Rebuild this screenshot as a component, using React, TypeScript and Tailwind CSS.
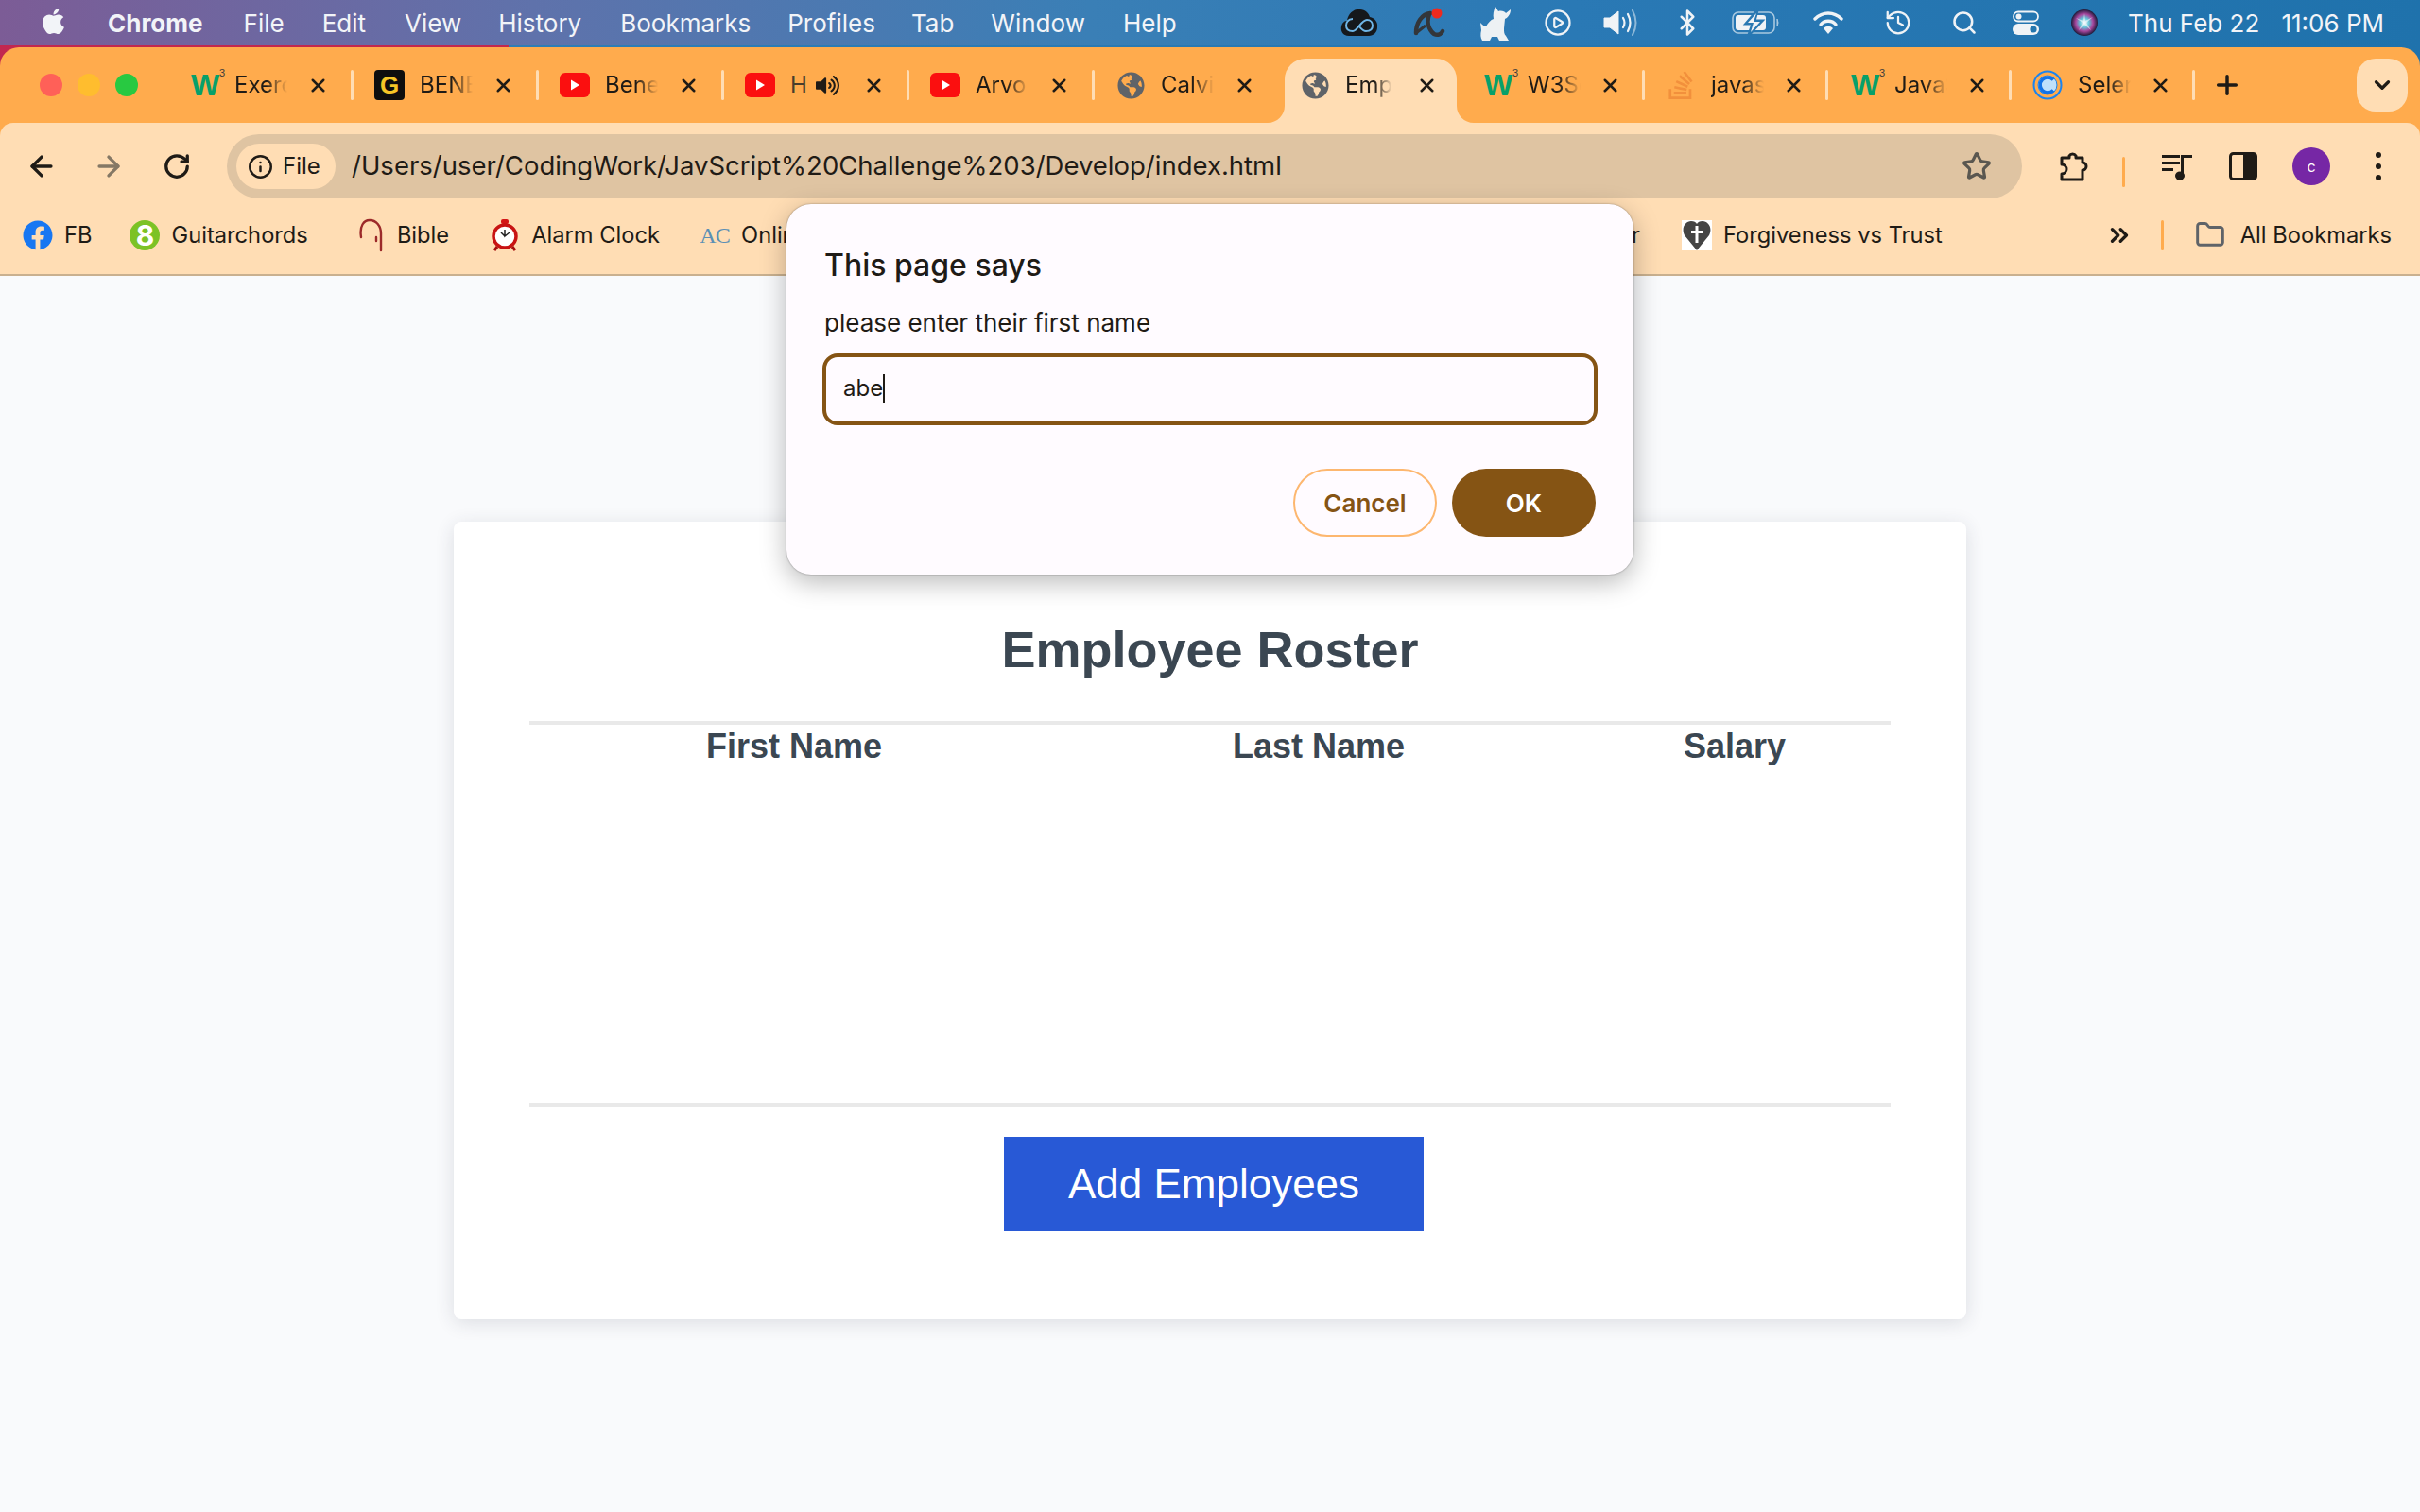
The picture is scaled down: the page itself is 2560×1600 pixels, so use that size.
import React from "react";
import { ArrowLeft, ArrowRight, RotateCw, Info, Star, X, Plus, ChevronDown, ChevronsRight, Folder, Search, History, Bluetooth, CirclePlay } from "lucide-react";
import { FaApple, FaFacebook, FaGlobeAmericas, FaVolumeUp, FaStackOverflow } from "react-icons/fa";

const W3 = () => (
  <span className="relative flex w-[32px] h-[32px] items-center justify-center font-['Liberation_Sans',sans-serif] font-bold text-[32px] leading-none text-[#07a06a] tracking-[-2px]">
    W<span className="absolute right-[-4px] top-[-2px] text-[11px] font-normal text-[#3c3c3c]">3</span>
  </span>
);
const GIcon = () => (
  <span className="flex w-[32px] h-[32px] items-center justify-center rounded-[4px] bg-[#0e0e0e] font-['Liberation_Sans',sans-serif] font-bold text-[26px] leading-none text-[#f6c627]">G</span>
);
const YT = () => (
  <svg width="32" height="26" viewBox="0 0 32 26"><rect width="32" height="26" rx="6" fill="#fb0f0f" /><path d="M12 7.5 L21 13 L12 18.5 Z" fill="#fff" /></svg>
);
const Globe = () => <FaGlobeAmericas size={29} color="#5f6368" />;
const SO = () => <FaStackOverflow size={34} color="#f2903c" />;
const Sel = () => (
  <svg width="32" height="34" viewBox="0 0 32 34" fill="none">
    <circle cx="16" cy="17" r="14.5" stroke="#1a84f0" strokeWidth="2" />
    <circle cx="16" cy="17" r="10" fill="#bfe0fb" stroke="#1a84f0" strokeWidth="1" />
    <path d="M22 11.5 A8 8 0 1 0 22 22.5" stroke="#1473e6" strokeWidth="3.5" />
  </svg>
);

type T = { icon: React.ReactNode; text: string; wide?: boolean; sep?: boolean; audio?: boolean };
const tabs: T[] = [
  { icon: <W3 />, text: "Exercises", wide: true, sep: true },
  { icon: <GIcon />, text: "BENEFITS", wide: true, sep: true },
  { icon: <YT />, text: "Benefits", wide: true, sep: true },
  { icon: <YT />, text: "H", wide: true, sep: true, audio: true },
  { icon: <YT />, text: "Arvo Part", wide: true, sep: true },
  { icon: <Globe />, text: "Calvin", wide: true, sep: false },
];
const tabs2: T[] = [
  { icon: <W3 />, text: "W3Schools", sep: true },
  { icon: <SO />, text: "javascript", sep: true },
  { icon: <W3 />, text: "JavaScript", sep: true },
  { icon: <Sel />, text: "Selenium", sep: true },
];

const Tab = ({ t }: { t: T }) => (
  <div className={`flex h-[56px] items-center shrink-0 ${t.wide ? "w-[196px]" : "w-[194px]"}`}>
    <div className="ml-[22px] flex w-[32px] justify-center shrink-0">{t.icon}</div>
    {t.audio ? (
      <div className="ml-[16px] flex w-[66px] items-center shrink-0">
        <span className="text-[24px] text-[#4a3d2c]">H</span>
        <FaVolumeUp size={25} color="#1f1b16" className="ml-[9px]" />
      </div>
    ) : (
      <div className="ml-[16px] w-[66px] shrink-0 overflow-hidden whitespace-nowrap text-[24px] text-[#1f1b16] [mask-image:linear-gradient(90deg,#000_50%,transparent_85%)]">{t.text}</div>
    )}
    <div className={`flex justify-center shrink-0 ${t.wide ? "w-[44px]" : "w-[42px]"}`}><X size={23} strokeWidth={2.6} color="#1f1b16" /></div>
    {t.sep && <div className="ml-auto h-[32px] w-[3px] rounded-full bg-[#ffddb4]" />}
  </div>
);

const Bm = ({ icon, text, className = "", gap = "ml-[12px]" }: { icon: React.ReactNode; text: string; className?: string; gap?: string }) => (
  <div className={`flex items-center shrink-0 ${className}`}>
    <div className="flex w-[32px] justify-center">{icon}</div>
    <span className={`${gap} text-[23.7px] text-[#1f1b16] whitespace-nowrap`}>{text}</span>
  </div>
);

const Alarm = () => (
  <svg width="28" height="34" viewBox="0 0 28 34">
    <rect x="10" y="0" width="8" height="5" rx="2" fill="#d41616" />
    <circle cx="14" cy="18" r="12" fill="#fff" stroke="#c81313" strokeWidth="3.5" />
    <path d="M14 11 V18 L19 14 M14 18 L10 14" stroke="#222" strokeWidth="1.5" fill="none" />
    <path d="M6 29 L3 33 M22 29 L25 33" stroke="#a40f0f" strokeWidth="3" />
  </svg>
);
const Heart = () => (
  <svg width="32" height="32" viewBox="0 0 32 32">
    <rect width="32" height="32" fill="#fff" />
    <path d="M16 32 L3 16 C-1 8 4 1 10 1 C13 1 15 2 16 4 C17 2 19 1 22 1 C28 1 33 8 29 16 Z" fill="#444" />
    <path d="M14.5 6 H17.5 V11 H22 V14 H17.5 V24 H14.5 V14 H10 V11 H14.5 Z" fill="#fff" />
  </svg>
);

const Dog = () => (
  <svg width="34" height="40" viewBox="0 0 34 40"><path d="M17 3 L20 8 C23 7 27 8 28 10 L33 6 C33 10 31 14 27 16 L26 26 C26 30 26 32 28 34 L31 39 H21 L19 35 H13 L11 39 H3 C1 36 1 32 2 28 L1 20 C3 22 5 24 7 24 C9 20 12 17 15 16 C14 11 15 7 17 3 Z" fill="#edf1f4" /></svg>
);
const Avira = () => (
  <svg width="34" height="34" viewBox="0 0 34 34" fill="none">
    <path d="M3 28 C3 17 9 8 18 7 M17 8 C14 16 16 24 22 29 C26 31 30 29 31 26" stroke="#33363a" strokeWidth="4.5" strokeLinecap="round" />
    <path d="M3 28 L13 20" stroke="#33363a" strokeWidth="3" />
    <circle cx="25" cy="7" r="5.5" fill="#ee2a1e" />
  </svg>
);
const Cloud = () => (
  <svg width="40" height="30" viewBox="0 0 40 30" fill="none">
    <path d="M9 29 C2 29 0 23 1 19 C2 14 5 13 7 13 C8 5 15 0 21 1 C26 1 30 5 31 9 C36 10 40 14 39 20 C39 25 35 29 30 29 Z" fill="#15181c" />
    <path d="M13 11 C8 11 6 15 6 18 C6 22 9 24 13 24 C18 24 22 12 28 12 C32 12 34 15 34 18 C34 22 31 24 27 24 C23 24 21 20 19 18" stroke="#6fb5e6" strokeWidth="2" />
  </svg>
);
const Vol = () => (
  <svg width="38" height="30" viewBox="0 0 38 30" fill="none">
    <path d="M1 10 H7 L16 3 V27 L7 20 H1 Z" fill="#f0f3f6" strokeLinejoin="round" stroke="#f0f3f6" />
    <path d="M21 10 Q24 15 21 20" stroke="#f0f3f6" strokeWidth="2.2" strokeLinecap="round" />
    <path d="M26 6 Q31 15 26 24" stroke="#f0f3f6" strokeWidth="2.2" strokeLinecap="round" />
    <path d="M31 2 Q38 15 31 28" stroke="#8fb9d8" strokeWidth="2" strokeLinecap="round" />
  </svg>
);
const Battery = () => (
  <svg width="52" height="26" viewBox="0 0 52 26" fill="none">
    <rect x="1" y="2" width="44" height="22" rx="6" stroke="#a9c9e0" strokeWidth="1.6" />
    <rect x="4" y="5" width="32" height="16" rx="3" fill="#f0f3f6" />
    <path d="M27 0 L15 14 H22 L18 26 L32 11 H24 Z" fill="#2978b2" stroke="#2978b2" strokeWidth="3" />
    <path d="M26 3 L17 13 H23 L20 23 L30 12 H23 Z" fill="#f0f3f6" />
    <path d="M48 9 Q50 13 48 17 Z" fill="#a9c9e0" stroke="#a9c9e0" />
  </svg>
);
const WifiIcon = () => (
  <svg width="32" height="26" viewBox="0 0 32 26" fill="none">
    <path d="M2 9 C10 1 22 1 30 9" stroke="#f0f3f6" strokeWidth="3.4" strokeLinecap="round" />
    <path d="M8 15 C12 10 20 10 24 15" stroke="#f0f3f6" strokeWidth="3.4" strokeLinecap="round" />
    <path d="M11 19 C14 16 18 16 21 19 L16 25 Z" fill="#f0f3f6" />
  </svg>
);
const Control = () => (
  <svg width="28" height="26" viewBox="0 0 28 26" fill="none">
    <rect x="1" y="1.5" width="26" height="10" rx="5" stroke="#f0f3f6" strokeWidth="1.8" />
    <circle cx="6.5" cy="6.5" r="3" fill="#f0f3f6" />
    <rect y="14" width="28" height="12" rx="6" fill="#f0f3f6" />
    <circle cx="22" cy="20" r="3.6" fill="#2476ae" />
  </svg>
);
const Siri = () => (
  <svg width="28" height="28" viewBox="0 0 28 28">
    <defs>
      <radialGradient id="sg" cx="50%" cy="50%" r="50%">
        <stop offset="0%" stopColor="#fff" />
        <stop offset="35%" stopColor="#62c6d8" />
        <stop offset="65%" stopColor="#a8469e" />
        <stop offset="100%" stopColor="#1c1a38" />
      </radialGradient>
    </defs>
    <circle cx="14" cy="14" r="14" fill="url(#sg)" />
    <path d="M14 4 L15 12 L23 8 L16 14 L21 22 L14 16 L8 22 L12 14 L5 9 L13 12 Z" fill="#f5f8fb" opacity=".6" />
  </svg>
);
const Puzzle = () => (
  <svg width="32" height="34" viewBox="0 0 32 34" fill="none">
    <path d="M3 8 H11 V6 A4 4 0 0 1 18 6 V8 H25 V13 A4 4 0 0 1 25 21 V31 H3 V25 A4.5 4.5 0 0 0 3 15 Z" stroke="#1f1b16" strokeWidth="3" strokeLinejoin="round" />
  </svg>
);
const Queue = () => (
  <svg width="32" height="30" viewBox="0 0 32 30" fill="#1f1b16">
    <rect x="0" y="3" width="19" height="3" /><rect x="0" y="10" width="19" height="3" /><rect x="0" y="17" width="12" height="3" />
    <rect x="20" y="3" width="12" height="3" /><rect x="20" y="3" width="3" height="21" /><ellipse cx="19" cy="25" rx="5" ry="4.5" />
  </svg>
);
const Side = () => (
  <svg width="30" height="30" viewBox="0 0 30 30" fill="none">
    <rect x="1.5" y="1.5" width="27" height="27" rx="3" stroke="#1f1b16" strokeWidth="3" />
    <rect x="15" y="1.5" width="13.5" height="27" fill="#1f1b16" />
  </svg>
);

const statusCells: [string, React.ReactNode][] = [
  ["w-[76px]", <Cloud />],
  ["w-[72px]", <Avira />],
  ["w-[67px]", <Dog />],
  ["w-[66px]", <CirclePlay size={30} color="#f0f3f6" strokeWidth={1.8} />],
  ["w-[68px]", <Vol />],
  ["w-[71px]", <Bluetooth size={30} color="#f0f3f6" strokeWidth={2} />],
  ["w-[76px]", <Battery />],
  ["w-[76px]", <WifiIcon />],
  ["w-[72px]", <History size={30} color="#f0f3f6" strokeWidth={1.8} />],
  ["w-[67px]", <Search size={28} color="#f0f3f6" strokeWidth={2.2} />],
  ["w-[63px]", <Control />],
  ["w-[62px]", <Siri />],
];

const menus: [string, string][] = [
  ["File", "ml-[43px]"], ["Edit", "ml-[40px]"], ["View", "ml-[41px]"], ["History", "ml-[39px]"], ["Bookmarks", "ml-[41px]"],
  ["Profiles", "ml-[39px]"], ["Tab", "ml-[38px]"], ["Window", "ml-[39px]"], ["Help", "ml-[40px]"],
];

export default function App() {
  return (
    <div className="relative flex h-[1600px] w-[2560px] flex-col overflow-hidden bg-[#f9fafc] font-['Inter',sans-serif]">
      {/* macOS menu bar */}
      <div className="flex h-[48px] shrink-0 items-center bg-[linear-gradient(90deg,#7c5c96_0%,#5f72ab_22%,#3a7fb6_45%,#2a79b5_65%,#1f72ac_100%)] text-[26px] text-[#f2f4f8]">
        <FaApple size={31} color="#f2f4f8" className="ml-[41px] mb-[3px]" />
        <span className="ml-[42px] font-bold">Chrome</span>
        {menus.map(([m, c]) => <span key={m} className={c}>{m}</span>)}
        <div className="flex-1" />
        {statusCells.map(([w, icon], i) => <div key={i} className={`flex justify-center ${w}`}>{icon}</div>)}
        <div className="ml-[15px] mr-[38px] flex w-[271px] justify-between whitespace-nowrap"><span>Thu Feb 22</span><span>11:06 PM</span></div>
      </div>

      {/* Browser chrome */}
      <div className="shrink-0 border-b-[2px] border-[#c9b08f] bg-[linear-gradient(90deg,#c2274f_0%,#c2274f_21%,#2f7db5_21%,#1f72ac_100%)] pt-[2px]">
        <div className="rounded-t-[20px] bg-[#ffab4d]">
          <div className="flex h-[80px] items-start pl-[42px] pt-[12px]">
            <div className="mt-[16px] h-[24px] w-[24px] shrink-0 rounded-full bg-[#ff6058]" />
            <div className="ml-[16px] mt-[16px] h-[24px] w-[24px] shrink-0 rounded-full bg-[#ffbd2e]" />
            <div className="ml-[16px] mt-[16px] h-[24px] w-[24px] shrink-0 rounded-full bg-[#28c941]" />
            <div className="w-[32px] shrink-0" />
            {tabs.map((t, i) => <Tab key={i} t={t} />)}
            {/* active tab */}
            <div className="relative mx-[5px] flex h-[68px] w-[182px] shrink-0 items-start rounded-t-[22px] bg-[#ffddb4]">
              <div className="flex h-[56px] items-center">
                <div className="ml-[16px] flex w-[32px] justify-center"><Globe /></div>
                <div className="ml-[16px] w-[52px] overflow-hidden whitespace-nowrap text-[24px] text-[#1f1b16] [mask-image:linear-gradient(90deg,#000_60%,transparent_95%)]">Employee</div>
                <div className="ml-[19px] flex w-[30px] justify-center"><X size={23} strokeWidth={2.6} color="#1f1b16" /></div>
              </div>
              <svg className="absolute bottom-0 left-[-18px]" width="18" height="18" viewBox="0 0 18 18"><path d="M18 0 V18 H0 C10 18 18 10 18 0 Z" fill="#ffddb4" /></svg>
              <svg className="absolute bottom-0 right-[-18px]" width="18" height="18" viewBox="0 0 18 18"><path d="M0 0 V18 H18 C8 18 0 10 0 0 Z" fill="#ffddb4" /></svg>
            </div>
            {tabs2.map((t, i) => <Tab key={i} t={t} />)}
            <div className="ml-[18px] flex h-[56px] items-center"><Plus size={32} strokeWidth={2.6} color="#1f1b16" /></div>
            <div className="ml-auto mr-[13px] flex h-[56px] w-[54px] items-center justify-center rounded-[20px] bg-[#ffddb4]"><ChevronDown size={26} strokeWidth={3} color="#1f1b16" /></div>
          </div>

          <div className="rounded-t-[14px] bg-[#ffddb4]">
            {/* Toolbar */}
            <div className="flex h-[92px] items-start pt-[12px]">
              <div className="flex h-[68px] w-[240px] shrink-0 items-center pl-[27px]">
                <ArrowLeft size={34} strokeWidth={2.4} color="#1f1b16" />
                <ArrowRight size={34} strokeWidth={2.4} color="#857865" className="ml-[37px]" />
                <RotateCw size={30} strokeWidth={2.6} color="#1f1b16" className="ml-[40px]" />
              </div>
              <div className="flex h-[68px] w-[1899px] shrink-0 items-center rounded-full bg-[#dfc4a2] pl-[10px] pr-[32px]">
                <div className="flex h-[48px] w-[105px] items-center rounded-full bg-[#ffddb4] pl-[12px]">
                  <Info size={27} strokeWidth={2.2} color="#1f1b16" />
                  <span className="ml-[10px] text-[24px] text-[#1f1b16]">File</span>
                </div>
                <span className="ml-[17px] whitespace-nowrap text-[27.5px] text-[#1f1b16]">/Users/user/CodingWork/JavScript%20Challenge%203/Develop/index.html</span>
                <Star size={32} strokeWidth={2.4} color="#5a5750" className="ml-auto" />
              </div>
              <div className="ml-[39px] flex h-[68px] w-[32px] items-center justify-center"><Puzzle /></div>
              <div className="ml-[35px] h-[32px] w-[3px] self-center rounded-full bg-[#ffab4d]" />
              <div className="ml-[39px] flex h-[68px] items-center"><Queue /></div>
              <div className="ml-[39px] flex h-[68px] items-center"><Side /></div>
              <div className="ml-[37px] flex h-[68px] items-center">
                <div className="flex h-[40px] w-[40px] items-center justify-center rounded-full bg-[#7627a5] text-[16px] text-white">c</div>
              </div>
              <div className="ml-[48px] flex h-[68px] flex-col items-center justify-center gap-[6px]">
                <span className="h-[6px] w-[6px] rounded-full bg-[#1f1b16]" /><span className="h-[6px] w-[6px] rounded-full bg-[#1f1b16]" /><span className="h-[6px] w-[6px] rounded-full bg-[#1f1b16]" />
              </div>
            </div>

            {/* Bookmarks */}
            <div className="flex h-[68px] items-center pb-[14px] pl-[24px]">
              <Bm icon={<FaFacebook size={32} color="#1877f2" />} text="FB" />
              <Bm className="ml-[40px]" icon={<span className="flex h-[32px] w-[32px] items-center justify-center rounded-full bg-[#7cc226] text-[30px] font-bold leading-none text-white">8</span>} text="Guitarchords" />
              <Bm className="ml-[50px]" icon={
                <svg width="26" height="36" viewBox="0 0 26 36" fill="none"><path d="M3 20 C1 8 6 2 12 2 C19 2 24 8 24 16 V34 M19 20 V24" stroke="#9c2a2a" strokeWidth="2.4" strokeLinecap="round" /></svg>
              } text="Bible" />
              <Bm className="ml-[43px]" icon={<Alarm />} text="Alarm Clock" />
              <Bm className="ml-[42px]" icon={<span className="font-['Liberation_Serif',serif] text-[24px] leading-none tracking-[-1px] text-[#5b8fb5]">AC</span>} text="Online Tools" />
              <div className="flex-1" />
              <span className="whitespace-nowrap text-[23.7px] text-[#1f1b16]">Timer</span>
              <Bm className="ml-[44px]" icon={<Heart />} text="Forgiveness vs Trust" />
              <ChevronsRight size={30} strokeWidth={2.6} color="#1f1b16" className="ml-[172px]" />
              <div className="ml-[29px] h-[32px] w-[3px] rounded-full bg-[#ffab4d]" />
              <div className="ml-[33px]"><Bm gap="ml-[16px]" icon={<Folder size={33} strokeWidth={2.2} color="#5f6368" />} text="All Bookmarks" /></div>
              <div className="w-[30px]" />
            </div>
          </div>
        </div>
      </div>

      {/* Page */}
      <div className="flex-1 pt-[260px] font-['Liberation_Sans',sans-serif]">
        <div className="mx-auto h-[844px] w-[1600px] rounded-[8px] bg-white px-[80px] pt-[100px] shadow-[0_4px_20px_rgba(40,50,70,0.14)]">
          <h1 className="h-[70px] text-center text-[54px] font-bold leading-[70px] text-[#3b4752]">Employee Roster</h1>
          <div className="mt-[41px] flex h-[408px] flex-col border-y-[4px] border-[#e9e9e9]">
            <div className="grid grid-cols-[560px_550px_330px] text-center text-[36px] font-bold leading-[46px] text-[#3b4752]">
              <div>First Name</div><div>Last Name</div><div>Salary</div>
            </div>
          </div>
          <button className="ml-[502px] mt-[32px] block h-[100px] w-[444px] bg-[#2859d6] text-[44px] text-white">Add Employees</button>
        </div>
      </div>

      {/* Prompt dialog */}
      <div className="absolute left-[832px] top-[216px] h-[392px] w-[896px] rounded-[26px] bg-[#fffbff] px-[40px] pt-[42px] text-[#1f1b16] shadow-[0_8px_28px_rgba(0,0,0,0.28),0_0_2px_rgba(0,0,0,0.4)]">
        <div className="h-[46px] text-[32px] font-medium leading-[46px]">This page says</div>
        <div className="mt-[20px] h-[36px] text-[26px] leading-[36px]">please enter their first name</div>
        <div className="-ml-[2px] mt-[14px] flex h-[76px] w-[820px] items-center rounded-[16px] border-[4px] border-[#855414] pb-[2px] pl-[18px] text-[24px]">
          abe<span className="h-[30px] w-[2px] bg-[#1f1b16]" />
        </div>
        <div className="mt-[46px] flex justify-end gap-[16px]">
          <div className="flex h-[72px] w-[152px] items-center justify-center rounded-full border-[2px] border-[#fdb76f] text-[26px] font-semibold text-[#855414]">Cancel</div>
          <div className="flex h-[72px] w-[152px] items-center justify-center rounded-full bg-[#855414] text-[26px] font-semibold text-white">OK</div>
        </div>
      </div>
    </div>
  );
}
